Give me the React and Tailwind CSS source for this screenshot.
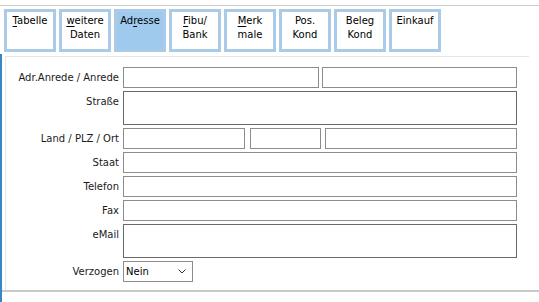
import React from "react";

const tabs = [
  { l1: [["T", true], ["abelle", false]], l2: null },
  { l1: [["w", true], ["eitere", false]], l2: "Daten" },
  { l1: [["Ad", false], ["r", true], ["esse", false]], l2: null, active: true },
  { l1: [["F", true], ["ibu/", false]], l2: "Bank" },
  { l1: [["M", true], ["erk", false]], l2: "male" },
  { l1: [["Pos.", false]], l2: "Kond" },
  { l1: [["Beleg", false]], l2: "Kond" },
  { l1: [["Einkauf", false]], l2: null },
];

function Tab({ t }) {
  return (
    <div
      className={
        "w-[52px] h-[43px] border-[3px] border-[#a9cbe7] flex flex-col items-center pt-[2px] text-[10px] leading-[14px] text-black " +
        (t.active ? "bg-[#9fcaed]" : "bg-white")
      }
    >
      <div>
        {t.l1.map(([s, u], i) => (
          <span key={i} className={u ? "underline underline-offset-2" : ""}>
            {s}
          </span>
        ))}
      </div>
      {t.l2 && <div>{t.l2}</div>}
    </div>
  );
}

function Input({ w, h = "h-[21px]", dark, extra = "" }) {
  return (
    <div
      className={
        "bg-white border " +
        (dark ? "border-[#6a6a6a] " : "border-[#8c8c8c] ") +
        h +
        " " +
        w +
        " " +
        extra
      }
    />
  );
}

function Row({ label, children }) {
  return (
    <div className="flex items-start">
      <div className="w-[117px] h-[21px] flex items-center justify-end pr-[4px] text-[10px] text-[#1a1a1a] whitespace-nowrap">
        {label}
      </div>
      <div className="flex">{children}</div>
    </div>
  );
}

export default function App() {
  return (
    <div
      className="w-[539px] h-[302px] bg-white overflow-hidden flex flex-col"
      style={{ fontFamily: '"DejaVu Sans", Verdana, sans-serif' }}
    >
      <div className="h-[5px]" />
      <div className="h-[1px] bg-[#cfcfcf]" />
      <div className="flex gap-[3px] pl-[4px] pt-[3px]">
        {tabs.map((t, i) => (
          <Tab key={i} t={t} />
        ))}
      </div>
      <div className="flex-1 border-l-2 border-[#3a86c2] mt-[2px] flex flex-col">
        <div className="h-[2px]" />
        <div className="ml-[3px] mr-[10px] border-t border-l border-[#e6e6e6] flex-1 flex flex-col gap-[3px] pt-[10px]">
          <Row label="Adr.Anrede / Anrede">
            <Input w="w-[196px]" />
            <Input w="w-[195px]" extra="ml-[3px]" />
          </Row>
          <Row label="Straße">
            <Input w="w-[394px]" h="h-[34px]" dark />
          </Row>
          <Row label="Land / PLZ / Ort">
            <Input w="w-[122px]" />
            <Input w="w-[71px]" extra="ml-[5px]" />
            <Input w="w-[192px]" extra="ml-[4px]" />
          </Row>
          <Row label="Staat">
            <Input w="w-[394px]" />
          </Row>
          <Row label="Telefon">
            <Input w="w-[394px]" />
          </Row>
          <Row label="Fax">
            <Input w="w-[394px]" />
          </Row>
          <Row label="eMail">
            <Input w="w-[394px]" h="h-[34px]" dark />
          </Row>
          <Row label="Verzogen">
            <div className="w-[70px] h-[21px] border border-[#8c8c8c] bg-white flex items-center justify-between pl-[2px] pr-[6px] text-[10px] text-black">
              <span>Nein</span>
              <svg width="8" height="5" viewBox="0 0 8 5">
                <path d="M0.5 0.5 L4 4 L7.5 0.5" fill="none" stroke="#333" strokeWidth="1" />
              </svg>
            </div>
          </Row>
        </div>
        <div className="h-[2px] bg-[#c9c9c9]" />
        <div className="h-[10px]" />
      </div>
    </div>
  );
}
